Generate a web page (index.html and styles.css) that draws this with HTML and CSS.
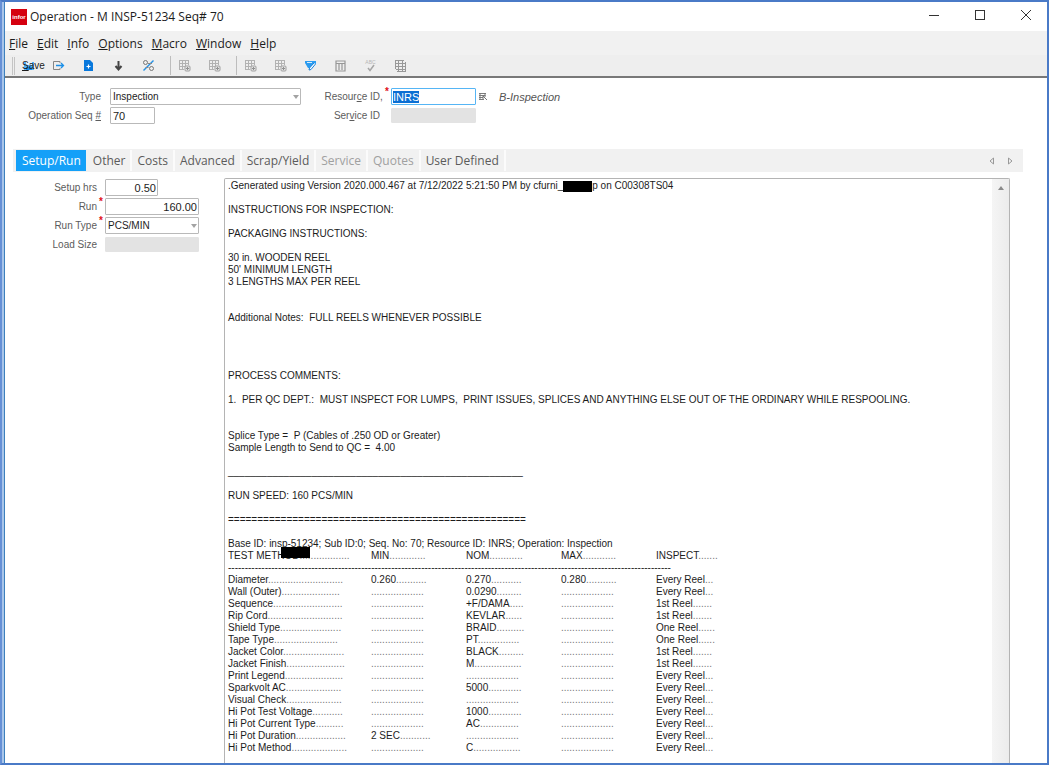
FILE: index.html
```html
<!DOCTYPE html>
<html lang="en">
<head>
<meta charset="utf-8">
<title>Operation - M INSP-51234 Seq# 70</title>
<link rel="stylesheet" href="styles.css">
</head>
<body>
<svg class="defs" aria-hidden="true">
  <symbol id="grid-plus" viewBox="0 0 13 13">
    <path d="M1 1.500h10M1 4.500h10M1 7.500h6M1 10.500h5M1.500 1v10M4.500 1v10M7.500 1v6M10.500 1v5" fill="none" stroke="#b2b2b2"/>
    <rect x="7" y="7" width="5" height="5" rx="1" fill="#e4e4e4" stroke="#a0a0a0"/>
    <path d="M8 9.500h3M9.500 8v3" stroke="#909090"/>
  </symbol>
</svg>
<div class="window">
  <header class="titlebar">
    <svg class="logo" viewBox="0 0 16 16" role="img" aria-label="infor"><rect width="16" height="16" fill="#d5000f"/><text x="8" y="10" text-anchor="middle" class="logo-text">infor</text></svg>
    <h1>Operation - M INSP-51234 Seq# 70</h1>
    <div class="window-buttons">
      <button type="button" aria-label="Minimize"><svg viewBox="0 0 12 12"><path d="M1 6.500h10"/></svg></button>
      <button type="button" aria-label="Maximize"><svg viewBox="0 0 12 12"><rect x="1.500" y="1.500" width="9" height="9"/></svg></button>
      <button type="button" aria-label="Close"><svg viewBox="0 0 12 12"><path d="M1 1l10 10M11 1L1 11"/></svg></button>
    </div>
  </header>
  <nav class="menubar">
    <button type="button"><u>F</u>ile</button>
    <button type="button"><u>E</u>dit</button>
    <button type="button"><u>I</u>nfo</button>
    <button type="button"><u>O</u>ptions</button>
    <button type="button"><u>M</u>acro</button>
    <button type="button"><u>W</u>indow</button>
    <button type="button"><u>H</u>elp</button>
  </nav>
  <div class="toolbar" role="toolbar">
    <span class="grip"></span>
    <button type="button" class="save"><svg viewBox="0 0 12 12" aria-hidden="true"><path d="M1 2h10v8H1z" fill="#56b4f7"/><path d="M3 2h6v3H3z" fill="#e8f5ff"/><path d="M3 7h6v3H3z" fill="#168cea"/></svg><span><u>S</u>ave</span></button>
    <button type="button" aria-label="Exit"><svg viewBox="0 0 13 13"><path d="M8 4V2.500H1.500v8H8V9" fill="none" stroke="#868686"/><path d="M4 6.500h7M9 4l2.500 2.500L9 9" fill="none" stroke="#1b8fe8" stroke-width="1.300"/></svg></button>
    <button type="button" aria-label="New"><svg viewBox="0 0 13 13"><path d="M2 1h6l3 3v8H2z" fill="#0878dc"/><path d="M4.500 7.500h4M6.500 5.500v4" stroke="#fff" stroke-width="1.200"/></svg></button>
    <button type="button" aria-label="Down"><svg viewBox="0 0 13 13"><path d="M6.500 2v8M3.500 7l3 3.500 3-3.500" fill="none" stroke="#444" stroke-width="2"/></svg></button>
    <button type="button" aria-label="Percent"><svg viewBox="0 0 13 13"><circle cx="3.500" cy="3.500" r="2" fill="none" stroke="#777"/><circle cx="9.500" cy="9.500" r="2" fill="none" stroke="#777"/><path d="M11.500 1.500l-10 10" stroke="#2491e6" stroke-width="1.400"/><path d="M6 4.500h4M3.500 8.500h3" stroke="#888"/></svg></button>
    <span class="separator"></span>
    <button type="button" aria-label="Insert row" disabled><svg><use href="#grid-plus"/></svg></button>
    <button type="button" aria-label="Delete row" disabled><svg><use href="#grid-plus"/></svg></button>
    <span class="separator"></span>
    <button type="button" aria-label="Insert column" disabled><svg><use href="#grid-plus"/></svg></button>
    <button type="button" aria-label="Delete column" disabled><svg><use href="#grid-plus"/></svg></button>
    <button type="button" aria-label="Edit notes"><svg viewBox="0 0 13 13"><path d="M1 2h11v3H9l-3 4H4L1 4z" fill="#2a9bf0"/><path d="M3 3.500h5" stroke="#d5ecfd"/><path d="M11.500 5L7 10.500l-2 .5.500-2L10 4" fill="#fff" stroke="#1681dc"/></svg></button>
    <button type="button" aria-label="Calculator"><svg viewBox="0 0 13 13"><path d="M2 2h9v10H2zM2 4.500h9M5 5v6M8 5v6" fill="none" stroke="#979797" stroke-width="1.200"/></svg></button>
    <button type="button" aria-label="Spelling" disabled><svg viewBox="0 0 13 13"><text x="6.500" y="5" text-anchor="middle" class="abc">ABC</text><path d="M4 9l2 2.500L10 6" fill="none" stroke="#a5a5a5" stroke-width="1.500"/></svg></button>
    <button type="button" aria-label="Table"><svg viewBox="0 0 13 13"><path d="M1 1.500h9M1 4.500h11M1 7.500h11M2 10.500h10M3 12.500h9M1.500 1v9M4.500 1v11M8.500 1v11M11.500 3v10" fill="none" stroke="#989898"/></svg></button>
  </div>

  <main>
    <form class="record">
      <div class="fields key-fields">
        <label for="type">Type</label>
        <span class="control"><span class="select wide"><select id="type"><option>Inspection</option></select></span></span>
        <label for="seq">Operation Seq <u>#</u></label>
        <span class="control"><input id="seq" class="tiny" value="70"></span>
      </div>
      <div class="fields resource-fields">
        <label for="resource">Resour<u>c</u>e ID<span class="mark">,</span></label>
        <span class="control required"><input id="resource" class="medium" value="INRS">
          <button type="button" class="lookup" aria-label="Browse resources"><svg viewBox="0 0 9 9"><path d="M0 1h7v1H0zM0 3h6v1H0zM0 5h4v1H0zM0 7h5v1H0z" fill="#7c7c7c"/><path d="M1 1v6M6 1v3M4 4l4 4M4 7V4h3" fill="none" stroke="#777"/></svg></button>
          <i>B-Inspection</i></span>
        <label for="service">Ser<u>v</u>ice ID</label>
        <span class="control"><input id="service" class="medium" disabled></span>
      </div>
    </form>

    <div class="tabs" role="tablist">
      <button type="button" role="tab" aria-selected="true">Setup/Run</button>
      <button type="button" role="tab">Other</button>
      <button type="button" role="tab">Costs</button>
      <button type="button" role="tab">Advanced</button>
      <button type="button" role="tab">Scrap/Yield</button>
      <button type="button" role="tab" disabled>Service</button>
      <button type="button" role="tab" disabled>Quotes</button>
      <button type="button" role="tab">User Defined</button>
      <span class="tab-scroll">
        <button type="button" aria-label="Previous tabs"><svg viewBox="0 0 6 8"><path d="M4.500 1v6L1 4z"/></svg></button>
        <button type="button" aria-label="Next tabs"><svg viewBox="0 0 6 8"><path d="M1.500 1v6L5 4z"/></svg></button>
      </span>
    </div>

    <div class="panel">
      <form class="fields run-fields">
        <label for="setup">Setup hrs</label>
        <span class="control"><input id="setup" class="small number" value="0.50"></span>
        <label for="run">Run</label>
        <span class="control required"><input id="run" class="number" value="160.00"></span>
        <label for="runtype">Run Type</label>
        <span class="control required"><span class="select"><select id="runtype"><option>PCS/MIN</option></select></span></span>
        <label for="load">Load Size</label>
        <span class="control"><input id="load" disabled></span>
      </form>
      <section class="memo" aria-label="Operation specifications">
        <div class="memo-text">
          <p>.Generated using Version 2020.000.467 at 7/12/2022 5:21:50 PM by cfurni_<span class="redacted"></span>p on C00308TS04</p>
          <p>INSTRUCTIONS FOR INSPECTION:</p>
          <p>PACKAGING INSTRUCTIONS:</p>
          <p>30 in. WOODEN REEL<br>50' MINIMUM LENGTH<br>3 LENGTHS MAX PER REEL</p>
          <p class="gap-2">Additional Notes:&nbsp; FULL REELS WHENEVER POSSIBLE</p>
          <p class="gap-4">PROCESS COMMENTS:</p>
          <p>1.&nbsp; PER QC DEPT.:&nbsp; MUST INSPECT FOR LUMPS,&nbsp; PRINT ISSUES, SPLICES AND ANYTHING ELSE OUT OF THE ORDINARY WHILE RESPOOLING.</p>
          <p class="gap-2">Splice Type =&nbsp; P (Cables of .250 OD or Greater)<br>Sample Length to Send to QC =&nbsp; 4.00</p>
          <p>_____________________________________________________</p>
          <p>RUN SPEED: 160 PCS/MIN</p>
          <p>===================================================</p>
          <p>Base ID: insp-51234; Sub ID:0; Seq. No: 70; Resource ID: INRS; Operation: Inspection</p>
          <table>
            <colgroup><col class="method"><col class="value"><col class="value"><col class="value"><col></colgroup>
            <thead>
              <tr><th><span class="masked">TEST METHOD</span><s>..................</s></th><th>MIN<s>.............</s></th><th>NOM<s>............</s></th><th>MAX<s>............</s></th><th>INSPECT<s>.......</s></th></tr>
              <tr><td colspan="5">-------------------------------------------------------------------------------------------------------------------------------------</td></tr>
            </thead>
            <tbody>
              <tr><td>Diameter<s>...........................</s></td><td>0.260<s>...........</s></td><td>0.270<s>...........</s></td><td>0.280<s>...........</s></td><td>Every Reel<s>...</s></td></tr>
              <tr><td>Wall (Outer)<s>.....................</s></td><td><s>...................</s></td><td>0.0290<s>.........</s></td><td><s>...................</s></td><td>Every Reel<s>...</s></td></tr>
              <tr><td>Sequence<s>.........................</s></td><td><s>...................</s></td><td>+F/DAMA<s>.....</s></td><td><s>...................</s></td><td>1st Reel<s>.......</s></td></tr>
              <tr><td>Rip Cord<s>...........................</s></td><td><s>...................</s></td><td>KEVLAR<s>......</s></td><td><s>...................</s></td><td>1st Reel<s>.......</s></td></tr>
              <tr><td>Shield Type<s>......................</s></td><td><s>...................</s></td><td>BRAID<s>..........</s></td><td><s>...................</s></td><td>One Reel<s>......</s></td></tr>
              <tr><td>Tape Type<s>.......................</s></td><td><s>...................</s></td><td>PT<s>...............</s></td><td><s>...................</s></td><td>One Reel<s>......</s></td></tr>
              <tr><td>Jacket Color<s>......................</s></td><td><s>...................</s></td><td>BLACK<s>.........</s></td><td><s>...................</s></td><td>1st Reel<s>.......</s></td></tr>
              <tr><td>Jacket Finish<s>.....................</s></td><td><s>...................</s></td><td>M<s>.................</s></td><td><s>...................</s></td><td>1st Reel<s>.......</s></td></tr>
              <tr><td>Print Legend<s>.....................</s></td><td><s>...................</s></td><td><s>...................</s></td><td><s>...................</s></td><td>Every Reel<s>...</s></td></tr>
              <tr><td>Sparkvolt AC<s>....................</s></td><td><s>...................</s></td><td>5000<s>............</s></td><td><s>...................</s></td><td>Every Reel<s>...</s></td></tr>
              <tr><td>Visual Check<s>....................</s></td><td><s>...................</s></td><td><s>...................</s></td><td><s>...................</s></td><td>Every Reel<s>...</s></td></tr>
              <tr><td>Hi Pot Test Voltage<s>...........</s></td><td><s>...................</s></td><td>1000<s>............</s></td><td><s>...................</s></td><td>Every Reel<s>...</s></td></tr>
              <tr><td>Hi Pot Current Type<s>..........</s></td><td><s>...................</s></td><td>AC<s>..............</s></td><td><s>...................</s></td><td>Every Reel<s>...</s></td></tr>
              <tr><td>Hi Pot Duration<s>..................</s></td><td>2 SEC<s>...........</s></td><td><s>...................</s></td><td><s>...................</s></td><td>Every Reel<s>...</s></td></tr>
              <tr><td>Hi Pot Method<s>....................</s></td><td><s>...................</s></td><td>C<s>.................</s></td><td><s>...................</s></td><td>Every Reel<s>...</s></td></tr>
            </tbody>
          </table>
        </div>
        <div class="scrollbar"><button type="button" aria-label="Scroll up"><svg viewBox="0 0 6 4"><path d="M0 4l3-4 3 4z" fill="#8a8a8a"/></svg></button></div>
      </section>
    </div>
  </main>
</div>
<script src="script.js"></script>
</body>
</html>
```
FILE: styles.css
```css
* { box-sizing: border-box; }
body {
  margin: 0;
  font-family: "Liberation Sans", Arial, sans-serif;
  font-size: 10px;
  color: #1c1c1c;
}
button, input, select { font: inherit; color: inherit; margin: 0; }
button { padding: 0; border: 0; background: none; }
u { text-underline-offset: 1px; }
.defs { display: none; }

.window {
  display: flex;
  flex-direction: column;
  height: 100vh;
  border: 2px solid #4a7ac7;
  border-left-color: #6690d6;
  box-shadow: inset 2px 0 #a9c6ea, inset 3px 0 #3d80bd;
  padding-left: 3px;
  background: #fff;
  overflow: hidden;
}

.titlebar {
  display: flex;
  align-items: center;
  flex: none;
  height: 29px;
  padding-left: 6px;
  font-family: "Open Sans", "Noto Sans", sans-serif;
  font-size: 12px;
}
.titlebar h1 { margin: 0 0 0 3px; font-size: 12px; font-weight: 400; }
.logo { width: 16px; height: 16px; }
.logo-text { font: bold 6px "Liberation Sans", sans-serif; fill: #fff; }
.window-buttons { display: flex; margin-left: auto; }
.window-buttons button { width: 46px; height: 28px; padding-left: 4px; }
.window-buttons svg { width: 12px; height: 12px; fill: none; stroke: #333; }

.menubar {
  display: flex;
  flex: none;
  gap: 9px;
  height: 24px;
  padding-left: 4px;
  background: #f1f1f1;
  font-family: "Open Sans", "Noto Sans", sans-serif;
  font-size: 12px;
}

.toolbar {
  display: flex;
  align-items: center;
  flex: none;
  height: 23px;
  padding-left: 7px;
  background: #eee;
  border-bottom: 2px solid #787878;
}
.toolbar button { flex: none; width: 30px; height: 20px; line-height: 0; }
.toolbar svg { width: 13px; height: 13px; }
.toolbar .grip { width: 3px; height: 18px; border: solid #c4c4c4; border-width: 0 1px; }
.toolbar .separator { width: 1px; height: 19px; margin: 0 0 0 7px; background: #bdbdbd; }
.toolbar .separator + button { margin-left: -2px; }
.toolbar .save { position: relative; width: 28px; padding-left: 7px; line-height: 20px; }
.save svg { position: absolute; left: 8px; top: 4px; width: 12px; height: 12px; }
.save span { position: relative; }
.abc { font: 5px "Liberation Sans", sans-serif; fill: #b5b5b5; }

main { display: flex; flex-direction: column; flex: 1; min-height: 0; padding: 9px 24px 0 8px; }
.record { display: flex; align-items: flex-start; gap: 22px; height: 62px; flex: none; }
.fields { display: grid; grid-auto-rows: 19px; align-items: center; column-gap: 9px; }
.fields label { position: relative; text-align: right; color: #5c5c5c; white-space: nowrap; }
.mark { position: absolute; left: 100%; }
.key-fields { grid-template-columns: 88px 191px; }
.resource-fields { grid-template-columns: 57px 200px; column-gap: 11px; }
.control { position: relative; display: flex; align-items: center; }
.required::before { content: "*"; position: absolute; left: -6px; top: -2px; color: #e0101a; font-weight: 700; }
.fields input, .fields select {
  appearance: none;
  width: 100%;
  height: 17px;
  padding: 0 2px;
  border: 1px solid #b9b9b9;
  border-radius: 1px;
  background: #fff;
  outline: 0;
}
.fields input { font-size: 11px; }
.fields .tiny { width: 45px; }
.fields .small { width: 53px; }
.fields .medium { width: 85px; padding: 0 1px; }
.fields .number { text-align: right; padding-right: 1px; }
.fields input:disabled { height: 15px; border-color: #e3e3e3; background: #e3e3e3; }
.fields input:focus { border-color: #55b5f5; }
.fields ::selection { background: #0b6fd3; color: #fff; }
.select { position: relative; display: flex; width: 100%; }
.select::after {
  content: "";
  position: absolute;
  right: 2px;
  top: 7px;
  border: solid transparent;
  border-width: 4px 3px 0;
  border-top-color: #a3a3a3;
}
.lookup { width: 9px; height: 9px; margin: 0 11px 0 3px; line-height: 0; }
.lookup svg { width: 9px; height: 9px; }
.control i { font-size: 11px; color: #555; white-space: nowrap; }

.tabs {
  display: flex;
  flex: none;
  height: 23px;
  padding: 1px 4px 1px 3px;
  background: #f1f1f1;
  font-family: "Open Sans", "Noto Sans", sans-serif;
  font-size: 12px;
  color: #5b5b5b;
}
.tabs [role="tab"] { padding: 0 5px; border-right: 2px solid #fbfbfb; }
.tabs [role="tab"]:disabled { color: #a0a0a0; }
.tabs [role="tab"][aria-selected="true"] { padding: 0 5px 0 6px; border-right: 0; background: #14a0f8; color: #fff; }
.tabs [aria-selected="true"] + button { padding-left: 7px; }
.tab-scroll { display: flex; margin-left: auto; }
.tab-scroll button { width: 18px; line-height: 0; }
.tab-scroll svg { width: 6px; height: 8px; fill: none; stroke: #999; }

.panel { display: flex; flex: 1; min-height: 0; gap: 25px; padding: 6px 13px 0 0; }
.run-fields { flex: none; align-self: flex-start; grid-template-columns: 84px 94px; column-gap: 8px; }
.memo {
  display: flex;
  flex: 1;
  min-width: 0;
  border: 1px solid #b4b4b4;
  border-bottom: 0;
  border-radius: 2px 2px 0 0;
}
.memo-text { flex: 1; min-width: 0; overflow: hidden; padding: 1px 3px; line-height: 12px; }
.memo p { margin: 0 0 12px; white-space: nowrap; }
.memo p.gap-2 { margin-top: 24px; }
.memo p.gap-4 { margin-top: 46px; }
.memo p:last-of-type { margin: 0; }
.memo table { width: 500px; table-layout: fixed; border-collapse: collapse; }
.memo .method { width: 143px; }
.memo .value { width: 95px; }
.memo th, .memo td { padding: 0; font-weight: 400; text-align: left; white-space: nowrap; }
.memo s { color: #777; text-decoration: none; }
.redacted { display: inline-block; width: 29px; height: 11px; margin: 1px 0 0; background: #000; vertical-align: top; }
.masked { position: relative; }
.masked::after { content: ""; position: absolute; left: 53px; top: -3px; width: 29px; height: 11px; background: #000; }
.scrollbar { flex: none; width: 17px; background: linear-gradient(90deg, #f5f5f5, #ececec); }
.scrollbar button { display: block; width: 17px; height: 17px; line-height: 0; }
.scrollbar svg { width: 6px; height: 4px; }
```
FILE: script.js
```js
const resource = document.getElementById("resource");
resource.focus();
resource.select();
```
